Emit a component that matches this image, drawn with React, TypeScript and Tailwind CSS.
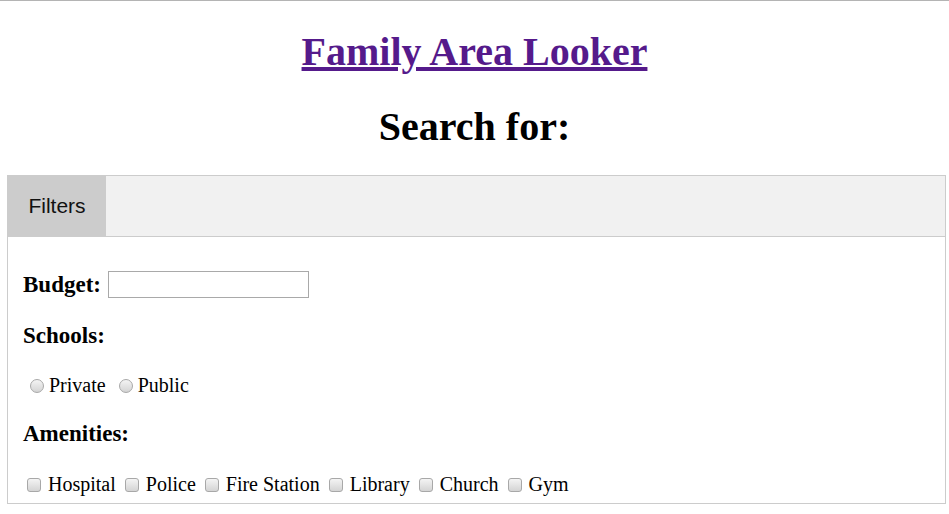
const serif = { fontFamily: '"Liberation Serif", "Times New Roman", serif' };

function Radio({ label }: { label: string }) {
  return (
    <label className="flex items-center mr-[6px]">
      <span className="ml-[7px] mr-[5px] inline-block h-[14px] w-[14px] rounded-full border border-[#a8a8a8] bg-gradient-to-b from-[#f4f4f4] to-[#d4d4d4]" />
      <span>{label}</span>
    </label>
  );
}

function Check({ label }: { label: string }) {
  return (
    <label className="flex items-center mr-[5px]">
      <span className="ml-[4px] mr-[7px] inline-block h-[14px] w-[14px] rounded-[3px] border border-[#a8a8a8] bg-gradient-to-b from-[#f4f4f4] to-[#d4d4d4]" />
      <span>{label}</span>
    </label>
  );
}

export default function App() {
  const amenities = ["Hospital", "Police", "Fire Station", "Library", "Church", "Gym"];

  return (
    <div className="h-[514px] w-[949px] overflow-hidden bg-white text-black" style={serif}>
      <div className="h-px bg-[#b4b4b4]" />
      <h1 className="mt-[28px] text-center text-[40px] font-bold leading-[46px]">
        <a href="#" className="text-[#551a8b] underline">
          Family Area Looker
        </a>
      </h1>
      <h1 className="mt-[29px] text-center text-[40px] font-bold leading-[46px]">Search for:</h1>
      <div className="ml-[7px] mt-[25px] h-[329px] w-[939px] border border-[#cccccc]">
        <div className="flex h-[61px] border-b border-[#cccccc] bg-[#f1f1f1]">
          <button
            className="h-[60px] w-[98px] bg-[#cccccc] text-[21px] text-[#111]"
            style={{ fontFamily: '"Liberation Sans", Arial, sans-serif' }}
          >
            Filters
          </button>
        </div>
        <div className="px-[15px]">
          <div className="mt-[34px] flex items-center text-[23px] font-bold leading-[27px]">
            <span>Budget:</span>
            <input className="ml-[7px] h-[27px] w-[201px] border border-[#a9a9a9] bg-white" />
          </div>
          <div className="mt-[24px] text-[23px] font-bold leading-[27px]">Schools:</div>
          <div className="mt-[25px] flex items-center text-[20px] leading-[23px]">
            <Radio label="Private" />
            <Radio label="Public" />
          </div>
          <div className="mt-[23px] text-[23px] font-bold leading-[27px]">Amenities:</div>
          <div className="mt-[26px] flex items-center text-[20px] leading-[23px]">
            {amenities.map(a => (
              <Check key={a} label={a} />
            ))}
          </div>
        </div>
      </div>
    </div>
  );
}
